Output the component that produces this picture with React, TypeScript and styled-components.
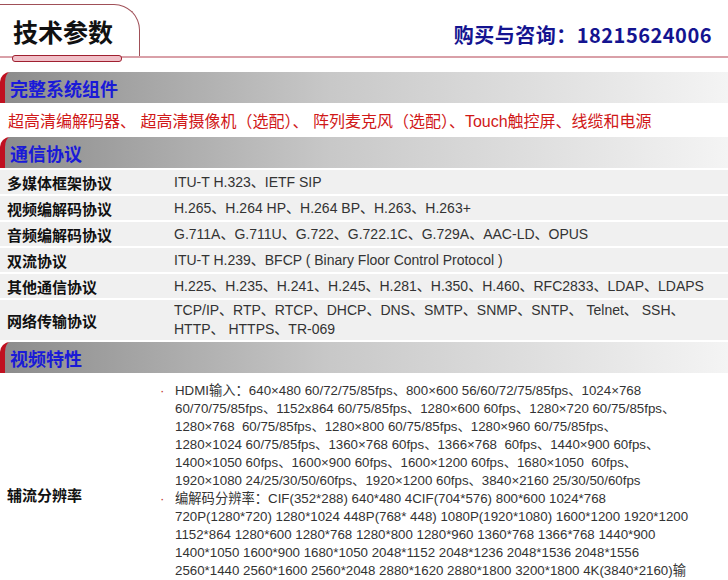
import React from "react";
import styled, { createGlobalStyle } from "styled-components";

const G = createGlobalStyle`
  body{margin:0;background:#fff;font-family:Arial,"Liberation Sans","Noto Sans CJK SC",sans-serif;overflow:hidden;}
`;
const Page = styled.div`width:728px;height:580px;overflow:hidden;`;
const Header = styled.div`height:56px;display:flex;align-items:center;justify-content:space-between;position:relative;border-bottom:2px solid #d9a0a8;margin-bottom:14px;`;
const TitleTab = styled.div`
  height:52px;width:140px;border:1px solid #a05058;border-left:none;border-bottom:none;border-radius:0 26px 0 0;
  display:flex;align-items:center;padding-left:13px;font-size:25px;font-weight:bold;color:#111;box-sizing:border-box;align-self:flex-end;
  position:relative;
  &:after{content:"";position:absolute;left:12px;bottom:-6px;width:108px;height:5px;border:1px solid #a02030;border-radius:3px;background:#f0c0c8;}
`;
const Phone = styled.div`font-size:20px;font-weight:bold;color:#141490;margin-right:16px;margin-top:12px;font-family:"Noto Sans CJK SC",sans-serif;letter-spacing:0.5px;`;
const Bar = styled.div`
  height:31px;display:flex;align-items:center;padding-left:5px;font-size:18px;font-weight:bold;color:#1a1ad8;
  background:linear-gradient(to right,#8c8c8c,#c8c8c8 45%,#f4f4f4);border-left:5px solid #c01020;border-top-left-radius:10px;
  font-family:"Noto Sans CJK SC",sans-serif;flex-shrink:0;
`;
const RedLine = styled.div`color:#d01818;font-size:16px;padding:5px 8px 5px;`;
const Table = styled.div`display:flex;flex-direction:column;gap:2px;padding-top:2px;`;
const Row = styled.div`display:grid;grid-template-columns:174px 1fr;background:#f0f0f0;min-height:22px;align-items:center;padding:1px 0;`;
const Key = styled.div`font-size:15px;font-weight:bold;color:#111;padding-left:7px;font-family:"Noto Sans CJK SC",sans-serif;`;
const Val = styled.div`font-size:14px;color:#333;line-height:19px;`;
const Video = styled.div`display:grid;grid-template-columns:160px 1fr;padding-top:9px;`;
const VKey = styled.div`display:flex;align-items:center;font-size:15px;font-weight:bold;color:#111;padding-left:7px;height:224px;font-family:"Noto Sans CJK SC",sans-serif;`;
const Bullet = styled.div`font-size:13.3px;color:#333;line-height:18px;padding-left:15px;position:relative;white-space:nowrap;
  &:before{content:"·";position:absolute;left:0;top:0;color:#c03030;}`;

const rows: [string, React.ReactNode][] = [
  ["多媒体框架协议", "ITU-T H.323、IETF SIP"],
  ["视频编解码协议", "H.265、H.264 HP、H.264 BP、H.263、H.263+"],
  ["音频编解码协议", "G.711A、G.711U、G.722、G.722.1C、G.729A、AAC-LD、OPUS"],
  ["双流协议", "ITU-T H.239、BFCP ( Binary Floor Control Protocol )"],
  ["其他通信协议", "H.225、H.235、H.241、H.245、H.281、H.350、H.460、RFC2833、LDAP、LDAPS"],
  ["网络传输协议", <>TCP/IP、RTP、RTCP、DHCP、DNS、SMTP、SNMP、SNTP、 Telnet、 SSH、<br/>HTTP、 HTTPS、TR-069</>],
];

export default function App() {
  return (
    <Page>
      <G />
      <Header>
        <TitleTab>技术参数</TitleTab>
        <Phone>购买与咨询：18215624006</Phone>
      </Header>
      <Bar>完整系统组件</Bar>
      <RedLine>超高清编解码器、 超高清摄像机（选配）、 阵列麦克风（选配）、Touch触控屏、线缆和电源</RedLine>
      <Bar>通信协议</Bar>
      <Table>
        {rows.map(([k, v]) => (
          <Row key={k}><Key>{k}</Key><Val>{v}</Val></Row>
        ))}
        <Bar>视频特性</Bar>
      </Table>
      <Video>
        <VKey>辅流分辨率</VKey>
        <div>
          <Bullet>HDMI输入：640×480 60/72/75/85fps、800×600 56/60/72/75/85fps、1024×768<br/>60/70/75/85fps、1152x864 60/75/85fps、1280×600 60fps、1280×720 60/75/85fps、<br/>1280×768&nbsp; 60/75/85fps、1280×800 60/75/85fps、1280×960 60/75/85fps、<br/>1280×1024 60/75/85fps、1360×768 60fps、1366×768&nbsp; 60fps、1440×900 60fps、<br/>1400×1050 60fps、1600×900 60fps、1600×1200 60fps、1680×1050&nbsp; 60fps、<br/>1920×1080 24/25/30/50/60fps、1920×1200 60fps、3840×2160 25/30/50/60fps</Bullet>
          <Bullet>编解码分辨率：CIF(352*288) 640*480 4CIF(704*576) 800*600 1024*768<br/>720P(1280*720) 1280*1024 448P(768* 448) 1080P(1920*1080) 1600*1200 1920*1200<br/>1152*864 1280*600 1280*768 1280*800 1280*960 1360*768 1366*768 1440*900<br/>1400*1050 1600*900 1680*1050 2048*1152 2048*1236 2048*1536 2048*1556<br/>2560*1440 2560*1600 2560*2048 2880*1620 2880*1800 3200*1800 4K(3840*2160)输<br/>出：1920×1080、3840×2160</Bullet>
        </div>
      </Video>
    </Page>
  );
}
